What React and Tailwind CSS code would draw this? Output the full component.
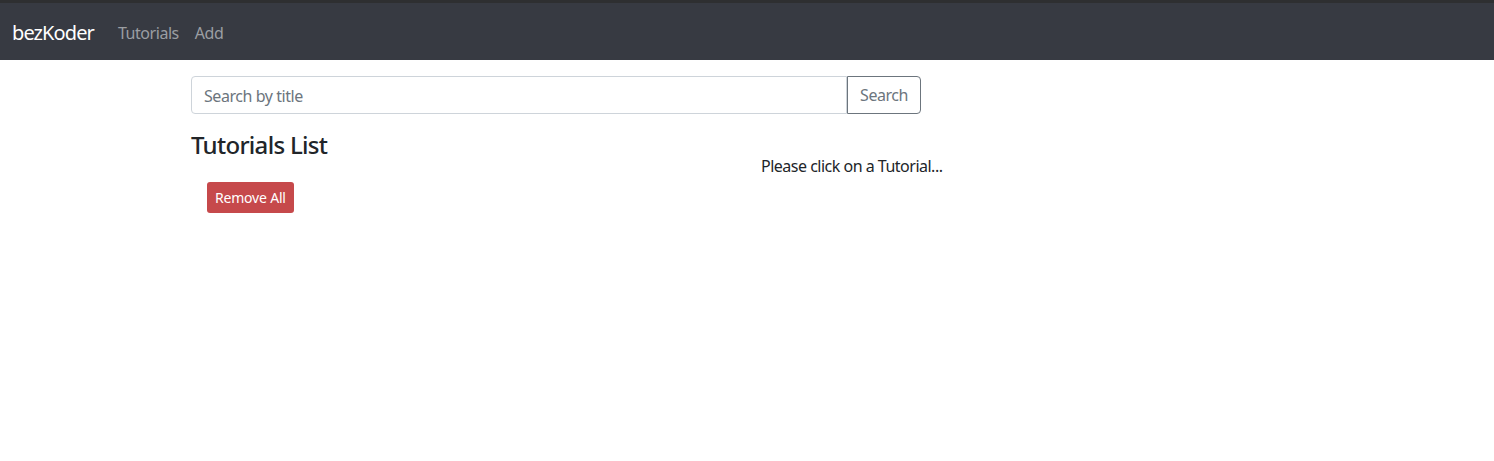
export default function App() {
  return (
    <div className="min-h-[461px] bg-white text-[#212529]" style={{ fontFamily: '"Noto Sans", "Open Sans", sans-serif' }}>
      <div className="h-[3px] bg-[#2e2f31]" />
      <nav className="flex h-[57px] items-center bg-[#373a42] px-[12px] pt-[2px]">
        <span className="mr-4 text-[20px] leading-[30px] tracking-[-0.9px] text-white">bezKoder</span>
        <span className="px-2 text-[16px] tracking-[-0.45px] text-[#9b9ea3]">Tutorials</span>
        <span className="px-2 text-[16px] tracking-[-0.45px] text-[#9b9ea3]">Add</span>
      </nav>
      <div className="mx-auto mt-4 w-[1140px] px-[14px]">
        <div className="flex w-[730px] tracking-[-0.45px]">
          <div className="flex h-[38px] flex-1 items-center rounded-l-[4px] border border-[#ced4da] px-3 pt-[1px] text-[16px] text-[#6c757d]">
            Search by title
          </div>
          <div className="flex h-[38px] items-center rounded-r-[4px] border border-[#6c757d] px-3 text-[16px] text-[#6c757d]">
            Search
          </div>
        </div>
        <div className="mt-4 flex">
          <div className="w-[570px]">
            <h4 className="mb-[7px] text-[24px] font-medium leading-[29px] tracking-[-0.7px]">Tutorials List</h4>
            <button className="ml-4 mt-4 h-[31px] rounded-[3px] bg-[#c6494b] px-2 text-[14px] tracking-[-0.2px] text-white">Remove All</button>
          </div>
          <div className="pt-6 text-[16px] leading-[24px] tracking-[-0.5px]">Please click on a Tutorial...</div>
        </div>
      </div>
    </div>
  );
}
